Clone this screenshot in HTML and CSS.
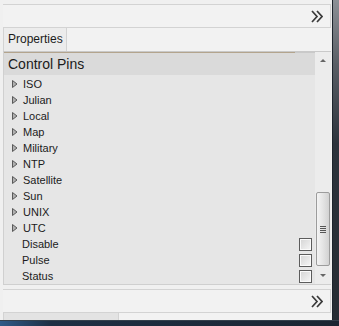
FILE: index.html
```html
<!DOCTYPE html>
<html lang="en">
<head>
    <meta charset="UTF-8">
    <title>Properties</title>
    <link rel="stylesheet" href="styles.css">
</head>
<body>

    <div class="window">
        <div class="pane">
            <div class="toolbar">
                <svg class="chevrons" width="12" height="13" viewBox="0 0 12 13">
                    <polyline points="1,1 6,6.5 1,12" />
                    <polyline points="6,1 11,6.5 6,12" />
                </svg>
            </div>

            <div class="tabs">
                <div class="tab">Properties</div>
            </div>

            <div class="grid">
                <div class="rows">
                    <div class="category">Control Pins</div>
                    <div class="row"><svg class="expander" width="6" height="8" viewBox="0 0 6 8"><polygon points="0.5,0.5 5,4 0.5,7.5" /></svg>ISO</div>
                    <div class="row"><svg class="expander" width="6" height="8" viewBox="0 0 6 8"><polygon points="0.5,0.5 5,4 0.5,7.5" /></svg>Julian</div>
                    <div class="row"><svg class="expander" width="6" height="8" viewBox="0 0 6 8"><polygon points="0.5,0.5 5,4 0.5,7.5" /></svg>Local</div>
                    <div class="row"><svg class="expander" width="6" height="8" viewBox="0 0 6 8"><polygon points="0.5,0.5 5,4 0.5,7.5" /></svg>Map</div>
                    <div class="row"><svg class="expander" width="6" height="8" viewBox="0 0 6 8"><polygon points="0.5,0.5 5,4 0.5,7.5" /></svg>Military</div>
                    <div class="row"><svg class="expander" width="6" height="8" viewBox="0 0 6 8"><polygon points="0.5,0.5 5,4 0.5,7.5" /></svg>NTP</div>
                    <div class="row"><svg class="expander" width="6" height="8" viewBox="0 0 6 8"><polygon points="0.5,0.5 5,4 0.5,7.5" /></svg>Satellite</div>
                    <div class="row"><svg class="expander" width="6" height="8" viewBox="0 0 6 8"><polygon points="0.5,0.5 5,4 0.5,7.5" /></svg>Sun</div>
                    <div class="row"><svg class="expander" width="6" height="8" viewBox="0 0 6 8"><polygon points="0.5,0.5 5,4 0.5,7.5" /></svg>UNIX</div>
                    <div class="row"><svg class="expander" width="6" height="8" viewBox="0 0 6 8"><polygon points="0.5,0.5 5,4 0.5,7.5" /></svg>UTC</div>
                    <div class="row leaf"><span class="label">Disable</span><span class="check"></span></div>
                    <div class="row leaf"><span class="label">Pulse</span><span class="check"></span></div>
                    <div class="row leaf"><span class="label">Status</span><span class="check"></span></div>
                </div>

                <div class="scrollbar">
                    <span class="arrow up"></span>
                    <div class="thumb"><span class="grip"></span></div>
                    <span class="arrow down"></span>
                </div>
            </div>

            <div class="toolbar bottom">
                <svg class="chevrons" width="12" height="13" viewBox="0 0 12 13">
                    <polyline points="1,1 6,6.5 1,12" />
                    <polyline points="6,1 11,6.5 6,12" />
                </svg>
            </div>

            <div class="statusbar">
                <div class="status-seg"></div>
            </div>
        </div>
        <div class="frame-right"></div>
    </div>
    <div class="frame-bottom"></div>

</body>
</html>
```

FILE: styles.css
```css
:root {
    --pane-bg: #f0f0f0;
    --bar-bg: #f2f2f2;
    --line: #d3d3d3;
    --row-bg: #e6e6e6;
    --header-bg: #dadada;
    --text: #1b1b1b;
}

body {
    margin: 0;
    width: 339px;
    height: 326px;
    overflow: hidden;
    background: var(--pane-bg);
    font-family: "Liberation Sans", Arial, sans-serif;
    color: var(--text);
}

.window {
    display: flex;
    height: 320px;
}

.pane {
    width: 328px;
    padding: 4px 1px 0 3px;
    display: flex;
    flex-direction: column;
}

/* Toolbars with the overflow chevrons */
.toolbar {
    height: 22px;
    border-top: 1px solid var(--line);
    border-bottom: 1px solid var(--line);
    border-right: 1px solid var(--line);
    background: var(--bar-bg);
    display: flex;
    align-items: center;
    justify-content: flex-end;
    padding-right: 7px;
}

.toolbar.bottom {
    margin-top: 4px;
}

.chevrons {
    fill: none;
    stroke: #3a3a3a;
    stroke-width: 1.7;
}

.tabs {
    height: 23px;
    display: flex;
    background: var(--bar-bg);
    border-left: 1px solid var(--line);
}

.tab {
    width: 58px;
    padding-left: 4px;
    font-size: 12px;
    line-height: 23px;
    background: #ececec;
    border-right: 1px solid var(--line);
}

/* Property grid */
.grid {
    display: flex;
    height: 232px;
    border-top: 1px solid #c9c9c9;
    border-bottom: 1px solid #cfcfcf;
    border-left: 1px solid #d0d0d0;
    background: linear-gradient(90deg, #b3a48d 0, #b3a48d 291px, #c9c9c9 291px) top / 100% 1px no-repeat, var(--row-bg);
}

.rows {
    flex: 1;
    padding-top: 1px;
}

.category {
    height: 22px;
    line-height: 22px;
    padding-left: 4px;
    font-size: 14px;
    background: var(--header-bg);
    margin-bottom: 1px;
}

.row {
    height: 16px;
    display: flex;
    align-items: center;
    font-size: 11px;
    padding-left: 8px;
}

.expander {
    fill: #b0b0b0;
    stroke: #5a5a5a;
    stroke-width: 1;
    margin-right: 5px;
}

.row.leaf {
    padding-left: 18px;
    justify-content: space-between;
    padding-right: 3px;
}

.check {
    width: 11px;
    height: 11px;
    border: 1px solid #5c5c5c;
    background: linear-gradient(135deg, #d4d4d4, #f6f6f6);
    box-shadow: inset 0 0 0 1px #fafafa;
}

.scrollbar {
    width: 16px;
    background: #ececec;
    display: flex;
    flex-direction: column;
    align-items: center;
    padding-top: 7px;
    box-sizing: border-box;
}

.arrow {
    width: 0;
    height: 0;
    border-left: 3px solid transparent;
    border-right: 3px solid transparent;
}

.arrow.up {
    border-bottom: 3px solid #666;
}

.arrow.down {
    border-top: 3px solid #666;
    margin-top: 8px;
}

.thumb {
    margin-top: 130px;
    width: 12px;
    height: 72px;
    border: 1px solid #9c9c9c;
    border-radius: 2px;
    background: linear-gradient(90deg, #f4f4f4, #e4e4e4 50%, #d2d2d2);
    display: flex;
    align-items: center;
    justify-content: center;
}

.grip {
    width: 6px;
    height: 7px;
    background: repeating-linear-gradient(180deg, #555 0, #555 1px, transparent 1px, transparent 2px);
}

.statusbar {
    height: 7px;
    background: var(--bar-bg);
    border-left: 1px solid var(--line);
}

.status-seg {
    width: 114px;
    height: 100%;
    background: #e3e3e3;
    border-right: 1px solid var(--line);
}

/* Window frame edges */
.frame-right {
    width: 6px;
    border-left: 1px solid #1c232b;
    background: linear-gradient(180deg, #8c9096 0, #5a5f66 20%, #2c333c 45%, #262c33 100%);
}

.frame-bottom {
    height: 6px;
    border-top: 1px solid #34404c;
    background: linear-gradient(90deg, #2f5a88 0, #1e2f44 15%, #1b2532 100%);
}
```
